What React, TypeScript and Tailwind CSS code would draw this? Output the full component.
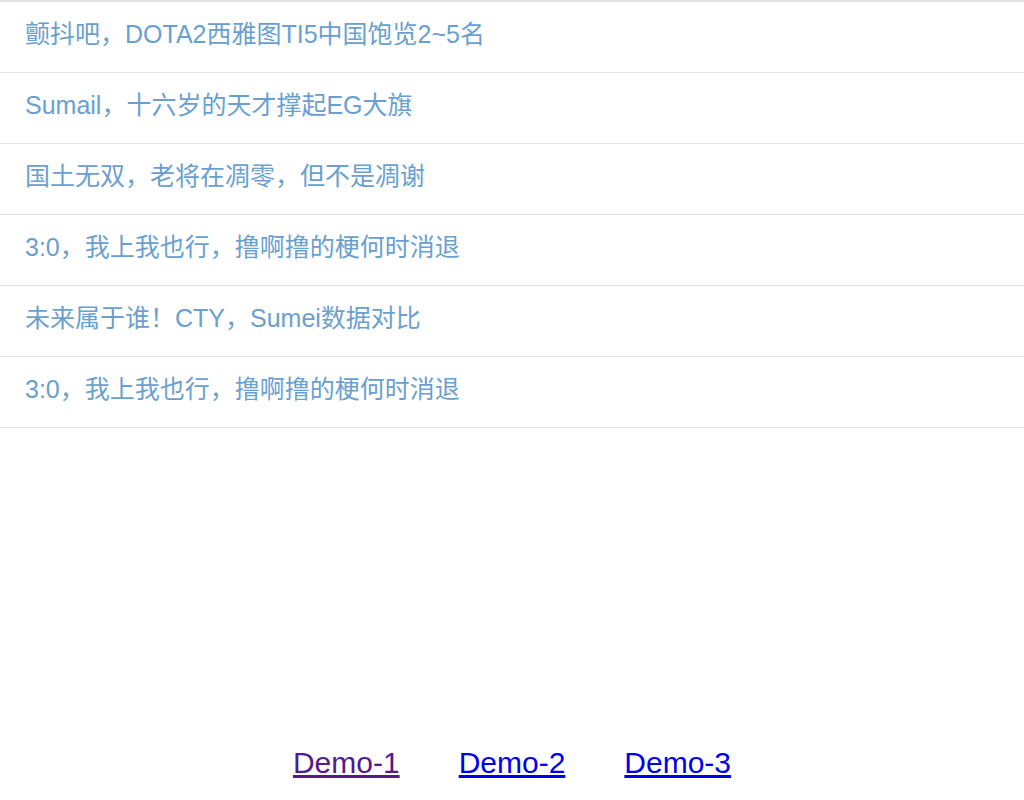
import React from 'react';

const items = [
  '颤抖吧，DOTA2西雅图TI5中国饱览2~5名',
  'Sumail，十六岁的天才撑起EG大旗',
  '国土无双，老将在凋零，但不是凋谢',
  '3:0，我上我也行，撸啊撸的梗何时消退',
  '未来属于谁！CTY，Sumei数据对比',
  '3:0，我上我也行，撸啊撸的梗何时消退',
];

const App: React.FC = () => {
  return (
    <div
      className="h-screen bg-white flex flex-col"
      style={{ fontFamily: '"Liberation Sans", "Noto Sans CJK SC", sans-serif' }}
    >
      <ul className="border-t-2 border-[#e3e3e3]">
        {items.map((text, i) => (
          <li
            key={i}
            className="h-[71px] border-b border-[#e3e3e3] flex items-center pl-[25px] pb-[4px] text-[25px] text-[#6a9fd0]"
          >
            {text}
          </li>
        ))}
      </ul>

      <div className="mt-auto pb-[22px] flex justify-center gap-[59px] text-[30px] leading-[30px]">
        <a href="#" className="underline text-[#551a8b]">Demo-1</a>
        <a href="#" className="underline text-[#0000ee]">Demo-2</a>
        <a href="#" className="underline text-[#0000ee]">Demo-3</a>
      </div>
    </div>
  );
};

export default App;
